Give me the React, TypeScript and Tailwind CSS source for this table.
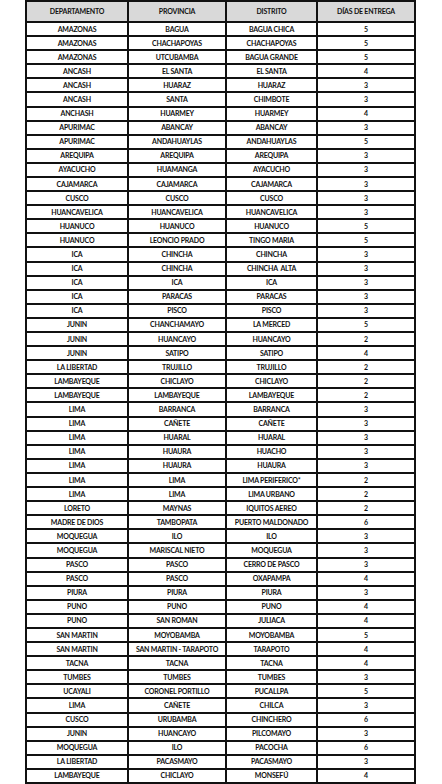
const rows: [string, string, string, string][] = [
  ["AMAZONAS", "BAGUA", "BAGUA CHICA", "5"],
  ["AMAZONAS", "CHACHAPOYAS", "CHACHAPOYAS", "5"],
  ["AMAZONAS", "UTCUBAMBA", "BAGUA GRANDE", "5"],
  ["ANCASH", "EL SANTA", "EL SANTA", "4"],
  ["ANCASH", "HUARAZ", "HUARAZ", "3"],
  ["ANCASH", "SANTA", "CHIMBOTE", "3"],
  ["ANCHASH", "HUARMEY", "HUARMEY", "4"],
  ["APURIMAC", "ABANCAY", "ABANCAY", "3"],
  ["APURIMAC", "ANDAHUAYLAS", "ANDAHUAYLAS", "5"],
  ["AREQUIPA", "AREQUIPA", "AREQUIPA", "3"],
  ["AYACUCHO", "HUAMANGA", "AYACUCHO", "3"],
  ["CAJAMARCA", "CAJAMARCA", "CAJAMARCA", "3"],
  ["CUSCO", "CUSCO", "CUSCO", "3"],
  ["HUANCAVELICA", "HUANCAVELICA", "HUANCAVELICA", "3"],
  ["HUANUCO", "HUANUCO", "HUANUCO", "5"],
  ["HUANUCO", "LEONCIO PRADO", "TINGO MARIA", "5"],
  ["ICA", "CHINCHA", "CHINCHA", "3"],
  ["ICA", "CHINCHA", "CHINCHA  ALTA", "3"],
  ["ICA", "ICA", "ICA", "3"],
  ["ICA", "PARACAS", "PARACAS", "3"],
  ["ICA", "PISCO", "PISCO", "3"],
  ["JUNIN", "CHANCHAMAYO", "LA MERCED", "5"],
  ["JUNIN", "HUANCAYO", "HUANCAYO", "2"],
  ["JUNIN", "SATIPO", "SATIPO", "4"],
  ["LA LIBERTAD", "TRUJILLO", "TRUJILLO", "2"],
  ["LAMBAYEQUE", "CHICLAYO", "CHICLAYO", "2"],
  ["LAMBAYEQUE", "LAMBAYEQUE", "LAMBAYEQUE", "2"],
  ["LIMA", "BARRANCA", "BARRANCA", "3"],
  ["LIMA", "CAÑETE", "CAÑETE", "3"],
  ["LIMA", "HUARAL", "HUARAL", "3"],
  ["LIMA", "HUAURA", "HUACHO", "3"],
  ["LIMA", "HUAURA", "HUAURA", "3"],
  ["LIMA", "LIMA", "LIMA PERIFERICO*", "2"],
  ["LIMA", "LIMA", "LIMA URBANO", "2"],
  ["LORETO", "MAYNAS", "IQUITOS AEREO", "2"],
  ["MADRE DE DIOS", "TAMBOPATA", "PUERTO MALDONADO", "6"],
  ["MOQUEGUA", "ILO", "ILO", "3"],
  ["MOQUEGUA", "MARISCAL NIETO", "MOQUEGUA", "3"],
  ["PASCO", "PASCO", "CERRO DE PASCO", "3"],
  ["PASCO", "PASCO", "OXAPAMPA", "4"],
  ["PIURA", "PIURA", "PIURA", "3"],
  ["PUNO", "PUNO", "PUNO", "4"],
  ["PUNO", "SAN ROMAN", "JULIACA", "4"],
  ["SAN MARTIN", "MOYOBAMBA", "MOYOBAMBA", "5"],
  ["SAN MARTIN", "SAN MARTIN - TARAPOTO", "TARAPOTO", "4"],
  ["TACNA", "TACNA", "TACNA", "4"],
  ["TUMBES", "TUMBES", "TUMBES", "3"],
  ["UCAYALI", "CORONEL PORTILLO", "PUCALLPA", "5"],
  ["LIMA", "CAÑETE", "CHILCA", "3"],
  ["CUSCO", "URUBAMBA", "CHINCHERO", "6"],
  ["JUNIN", "HUANCAYO", "PILCOMAYO", "3"],
  ["MOQUEGUA", "ILO", "PACOCHA", "6"],
  ["LA LIBERTAD", "PACASMAYO", "PACASMAYO", "3"],
  ["LAMBAYEQUE", "CHICLAYO", "MONSEFÚ", "4"],
];

const headers = ["DEPARTAMENTO", "PROVINCIA", "DISTRITO", "DÍAS DE ENTREGA"];

export default function App() {
  return (
    <div className="w-[442px] h-[784px] bg-white font-['Lato','Liberation_Sans',sans-serif] font-bold text-[#111] overflow-hidden">
      <div className="ml-[25px] w-[391px] h-[784px] bg-[#111] p-[2px] grid grid-cols-[100px_96px_89px_96px] grid-rows-[19px_repeat(54,1fr)] gap-[2px]">
        {headers.map((h) => (
          <div
            key={h}
            className="bg-[#d9d9d9] flex items-center justify-center text-[7px] leading-none tracking-[-0.2px] whitespace-pre"
          >
            {h}
          </div>
        ))}
        {rows.map((r, i) =>
          r.map((c, j) => (
            <div
              key={`${i}-${j}`}
              className="bg-white flex items-center justify-center text-[7px] leading-none tracking-[-0.2px] whitespace-pre"
            >
              {c}
            </div>
          ))
        )}
      </div>
    </div>
  );
}
